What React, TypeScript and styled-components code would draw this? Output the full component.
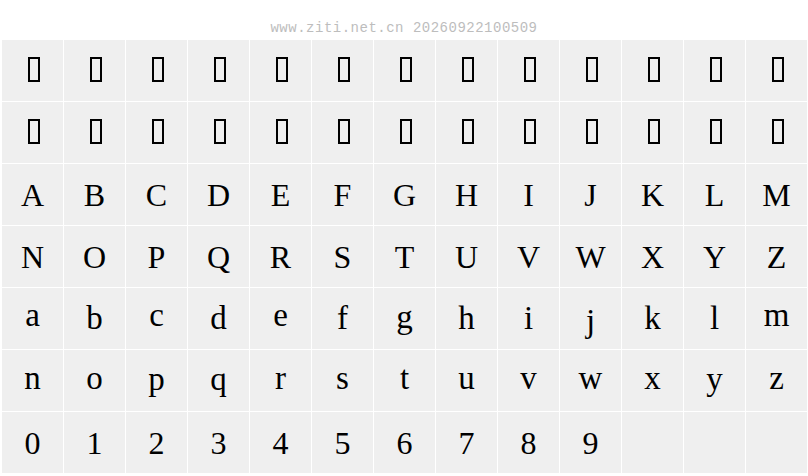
import styled, { createGlobalStyle } from 'styled-components';

const GlobalStyle = createGlobalStyle`
  html, body {
    margin: 0;
    padding: 0;
    background: #ffffff;
  }
`;

const Page = styled.div`
  width: 808px;
  height: 476px;
  background: #ffffff;
`;

const Stamp = styled.div`
  box-sizing: border-box;
  height: 40px;
  padding-top: 21px;
  text-align: center;
  font-family: 'Liberation Mono', 'DejaVu Sans Mono', monospace;
  font-size: 14px;
  line-height: 14px;
  letter-spacing: 0.5px;
  color: #bdbdbd;
`;

const Grid = styled.div`
  display: grid;
  grid-template-columns: repeat(13, 61px);
  grid-auto-rows: 61px;
  gap: 1px;
  padding-left: 2px;
`;

const Cell = styled.div`
  display: flex;
  align-items: center;
  justify-content: center;
  background: #efefef;
  font-family: 'Liberation Serif', 'Times New Roman', serif;
  font-size: 32px;
  line-height: 1;
  color: #000000;
`;

const Glyph = styled.span<{ $dy: number; $size: number }>`
  display: block;
  font-size: ${(p) => p.$size}px;
  transform: translateY(${(p) => p.$dy}px);
`;

const Tofu = styled.span`
  box-sizing: border-box;
  display: block;
  width: 12px;
  height: 25px;
  margin: -2px 0 0 3px;
  border: 2px solid #000000;
`;

const upper = 'ABCDEFGHIJKLMNOPQRSTUVWXYZ'.split('');
const lower = 'abcdefghijklmnopqrstuvwxyz'.split('');
const digits = '0123456789'.split('');

// the sample font lets some letters float off the common baseline
const shifts: Record<string, number> = {
  a: -3, c: -3, e: -3, m: -3, g: -1, j: 3,
  n: -2, o: -2, r: -2, s: -2, t: -2, u: -2, v: -2, w: -2, x: -2, z: -2,
  p: -1, q: -1, y: -1,
};

export default function App() {
  const tofus = Array.from({ length: 26 }, (_, i) => i);

  return (
    <Page>
      <GlobalStyle />
      <Stamp>www.ziti.net.cn 20260922100509</Stamp>
      <Grid>
        {tofus.map((i) => (
          <Cell key={`t${i}`}>
            <Tofu />
          </Cell>
        ))}
        {[...upper, ...lower, ...digits].map((ch) => (
          <Cell key={ch}>
            <Glyph $dy={shifts[ch] ?? 0} $size={lower.includes(ch) ? 33 : 32}>
              {ch}
            </Glyph>
          </Cell>
        ))}
        {[0, 1, 2].map((i) => (
          <Cell key={`e${i}`} />
        ))}
      </Grid>
    </Page>
  );
}
